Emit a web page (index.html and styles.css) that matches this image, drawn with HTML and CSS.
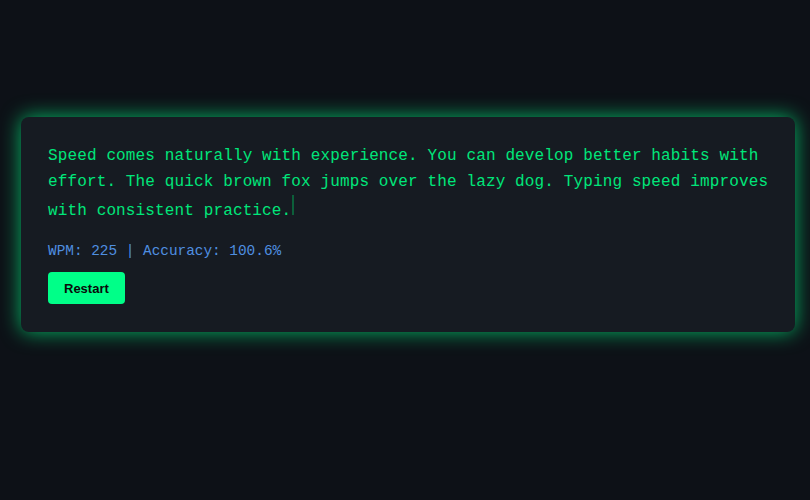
FILE: index.html
```html
<!DOCTYPE html>
<html>
<head>
<meta charset="utf-8">
<link rel="stylesheet" href="styles.css">
</head>
<body>
<main class="page">
  <section class="card">
    <p class="passage">Speed comes naturally with experience. You can develop better habits with effort. The quick brown fox jumps over the lazy dog. Typing speed improves with consistent practice.<span class="cursor"></span></p>
    <p class="stats">WPM: 225 | Accuracy: 100.6%</p>
    <button class="restart">Restart</button>
  </section>
</main>
</body>
</html>
```
FILE: styles.css
```css
html, body {
  margin: 0;
  padding: 0;
  background: #0d1117;
  height: 100%;
}
.page {
  padding: 117px 15px 0 21px;
}
.card {
  background: #161b22;
  border-radius: 8px;
  padding: 26px 20px 28px 27px;
  box-shadow: 0 0 20px rgba(0, 255, 136, 0.7);
}
.passage {
  margin: 0;
  font-family: "Liberation Mono", monospace;
  font-size: 16px;
  line-height: 26px;
  letter-spacing: 0.13px;
  color: #00e67a;
}
.cursor {
  display: inline-block;
  width: 2px;
  height: 20px;
  background: #0c5f3a;
  margin-left: 1px;
}
.stats {
  margin: 17px 0 11px;
  font-family: "Liberation Mono", monospace;
  font-size: 14.4px;
  line-height: 20px;
  color: #4f8fe0;
}
.restart {
  display: block;
  border: none;
  border-radius: 4px;
  background: #00ff88;
  color: #0a0a0a;
  font-family: "Liberation Sans", Arial, sans-serif;
  font-weight: bold;
  font-size: 13px;
  padding: 8px 16px;
  height: 32px;
}
```
